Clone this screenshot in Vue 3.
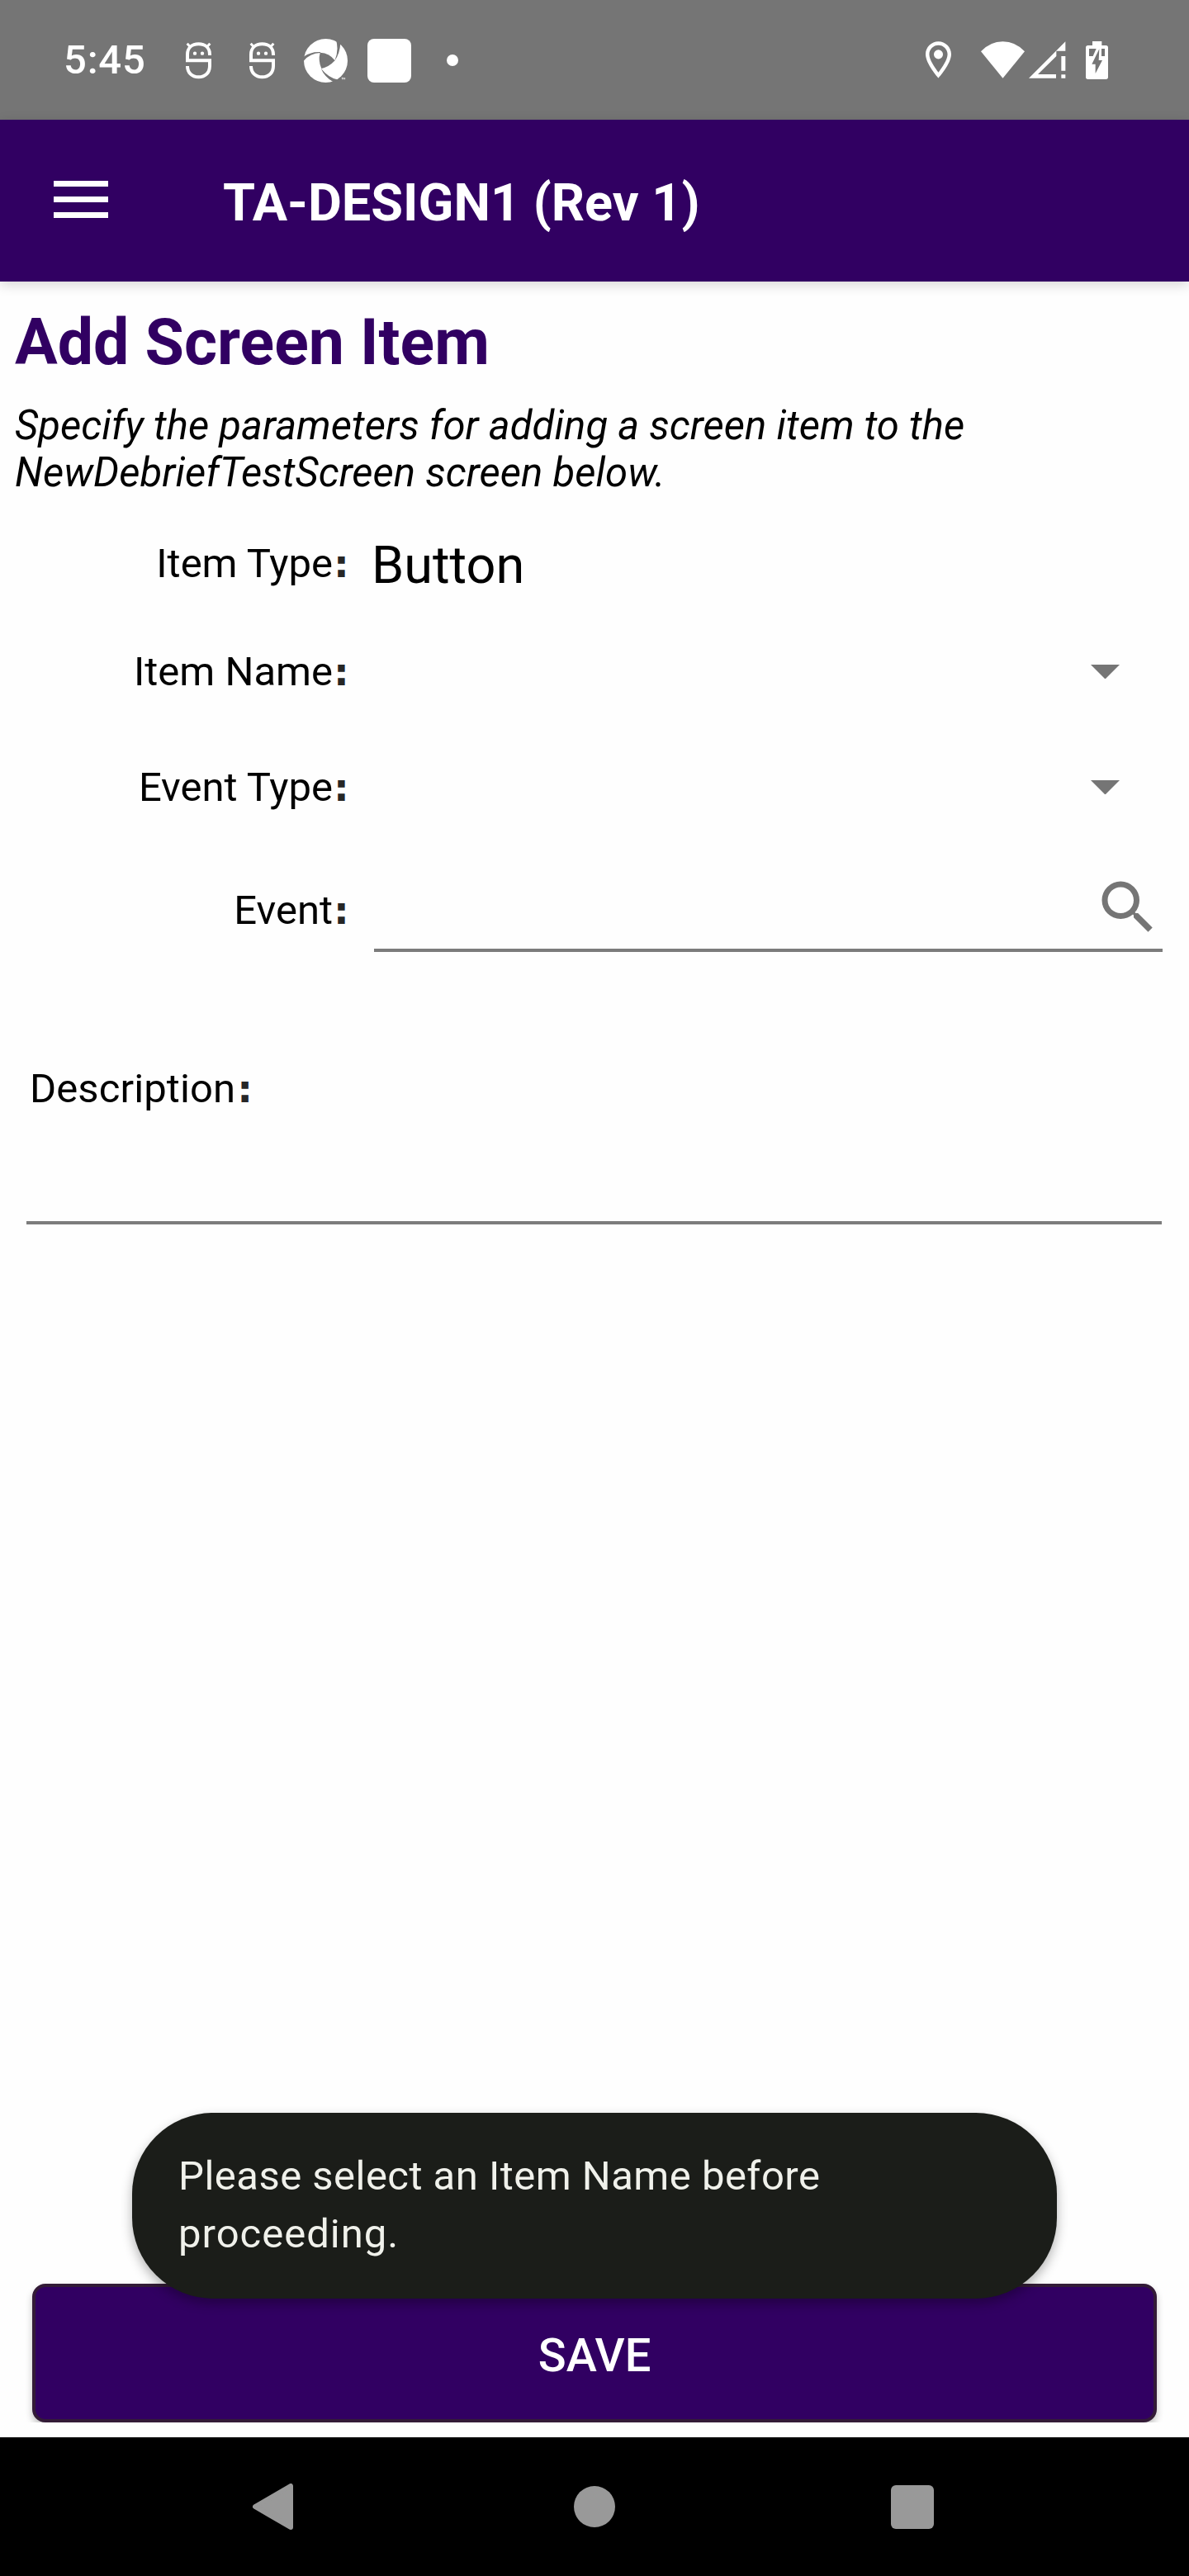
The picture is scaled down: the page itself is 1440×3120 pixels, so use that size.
<script setup>
const fields = [
  { label: 'Item Type', kind: 'text', value: 'Button' },
  { label: 'Item Name', kind: 'select' },
  { label: 'Event Type', kind: 'select' },
  { label: 'Event', kind: 'search' },
]
</script>

<template>
  <div class="screen">
    <div class="status">
      <span class="time">5:45</span>
      <svg v-for="n in 2" :key="n" class="face" viewBox="72 60 99 141">
        <g fill="none" stroke="#fff" stroke-width="12">
          <path d="M162 111V108C162 84 146 70 121.500 70S81 84 81 108V130H162V150C162 174 146 190 121.500 190S81 174 81 150" />
          <path d="M80 68L91 80M163 68L152 80" stroke-width="9" />
        </g>
        <circle cx="108" cy="104" r="6.500" fill="#fff" />
        <circle cx="135" cy="104" r="6.500" fill="#fff" />
      </svg>
      <svg class="aperture" viewBox="504 51 159 159">
        <circle cx="583.500" cy="130.500" r="79.500" fill="#fff" />
        <g fill="#757575">
          <path d="M563 101Q598 103 617 130Q596 153 568 159Q555 130 563 101Z" />
          <path d="M616 131Q632 95 621 54L630 48L637 66Q635 104 616 131Z" />
          <path d="M564 99Q530 96 500 118V136Q522 104 564 102Z" />
          <path d="M566 158Q578 188 611 208L630 200Q594 194 566 158Z" />
        </g>
        <path d="M641 193h6M644 193v6M648 199v-6l2.500 3l2.500-3v6" fill="none" stroke="#fff" stroke-width="2" />
      </svg>
      <span class="tile"></span>
      <span class="dot"></span>
      <svg class="pin" viewBox="5 2 14 20">
        <path fill="#fff" d="M12 2C8.130 2 5 5.130 5 9c0 5.250 7 13 7 13s7-7.750 7-13c0-3.870-3.130-7-7-7zM7 9c0-2.760 2.240-5 5-5s5 2.240 5 5c0 2.880-2.880 7.190-5 9.880C9.920 16.210 7 11.850 7 9z" />
        <circle cx="12" cy="9" r="2.500" fill="#fff" />
      </svg>
      <svg class="wifi" viewBox="324 150 159 135">
        <path fill="#fff" d="M324 187Q358 151 403.500 151T483 187L403.500 284Z" />
      </svg>
      <svg class="signal" viewBox="497 150 135 135">
        <path fill="#fff" d="M630 151V185H597V204L530 270H596V284H497ZM615 204H630V257H615ZM615 271H630V284H615Z" />
      </svg>
      <svg class="battery" viewBox="705 150 81 138">
        <path fill="#fff" d="M729 150H763V165H778Q786 165 786 173V280Q786 288 778 288H713Q705 288 705 280V173Q705 165 713 165H729Z" />
        <path fill="#757575" d="M717 177H774V204H717Z" />
        <path fill="#fff" d="M743 177H762V204H731Z" />
        <path fill="#757575" d="M754 178L727 233H740V267L765 219H752Z" />
      </svg>
    </div>

    <header class="appbar">
      <span class="menu"><i></i><i></i><i></i></span>
      <span class="title">TA-DESIGN1 (Rev 1)</span>
    </header>

    <main class="content">
      <h1>Add Screen Item</h1>
      <p class="intro">Specify the parameters for adding a screen item to the<br />NewDebriefTestScreen screen below.</p>

      <div v-for="f in fields" :key="f.label" class="row" :class="f.kind">
        <div class="label">{{ f.label }}<b>:</b></div>
        <div v-if="f.kind === 'text'" class="value">{{ f.value }}</div>
        <div v-else-if="f.kind === 'select'" class="picker">
          <svg viewBox="0 0 35 17.500"><path d="M0 0H35L17.500 17.500Z" fill="#757575" /></svg>
        </div>
        <div v-else class="input">
          <svg viewBox="0 0 24 24"><path fill="#757575" d="M15.500 14h-.79l-.28-.27A6.470 6.470 0 0 0 16 9.500 6.500 6.500 0 1 0 9.500 16c1.610 0 3.090-.59 4.230-1.570l.27.28v.79l5 4.990L20.490 19l-4.990-5zm-6 0C7.010 14 5 11.990 5 9.500S7.010 5 9.500 5 14 7.010 14 9.500 11.990 14 9.500 14z" /></svg>
        </div>
      </div>

      <div class="description">
        <div class="label">Description<b>:</b></div>
      </div>

      <div class="footer">
        <button class="save">SAVE</button>
      </div>
    </main>

    <nav class="nav">
      <svg class="back" viewBox="0 0 49 56"><path d="M46 3V53L3 28Z" fill="#999" stroke="#999" stroke-width="6" stroke-linejoin="round" /></svg>
      <span class="home"></span>
      <span class="recent"></span>
    </nav>

    <div class="toast">
      <div>Please select an Item Name before</div>
      <div class="last">proceeding.</div>
    </div>
  </div>
</template>

<style>
body {
  margin: 0;
}
</style>

<style scoped>
.screen {
  position: relative;
  width: 1440px;
  height: 3120px;
  display: flex;
  flex-direction: column;
  background: #fefefe;
  font-family: Roboto, sans-serif;
  color: #000;
  overflow: hidden;
}
svg {
  display: block;
  flex: none;
}
.status {
  height: 145px;
  flex: none;
  box-sizing: border-box;
  padding-left: 77px;
  display: flex;
  align-items: flex-start;
  background: #757575;
  color: #fff;
}
.time {
  width: 147px;
  margin-top: 44px;
  font-size: 49px;
  line-height: 57px;
  font-weight: 500;
  letter-spacing: 0.8px;
}
.face {
  width: 33px;
  height: 47px;
  margin: 50px 44px 0 0;
}
.aperture {
  width: 53px;
  height: 53px;
  margin: 47px 0 0 -10px;
}
.tile {
  width: 53px;
  height: 53px;
  margin: 47px 0 0 24px;
  border-radius: 8px;
  background: #fff;
}
.dot {
  width: 14px;
  height: 14px;
  margin: 66px 0 0 43px;
  border-radius: 50%;
  background: #fff;
}
.pin {
  width: 31px;
  height: 45px;
  margin: 50px 0 0 566px;
}
.wifi {
  width: 53px;
  height: 45px;
  margin: 50px 0 0 36px;
}
.signal {
  width: 45px;
  height: 45px;
  margin: 50px 0 0 5px;
}
.battery {
  width: 27px;
  height: 46px;
  margin: 50px 0 0 24px;
}
.appbar {
  position: relative;
  height: 196px;
  flex: none;
  display: flex;
  align-items: flex-start;
  background: #310062;
  color: #fff;
  box-shadow: 0 4px 14px rgba(0, 0, 0, 0.16);
}
.menu {
  width: 66px;
  margin: 74px 0 0 65px;
  display: flex;
  flex-direction: column;
  gap: 12px;
}
.menu i {
  height: 7px;
  background: #fff;
}
.title {
  margin: 64px 0 0 139px;
  font-size: 63px;
  line-height: 74px;
  font-weight: 700;
  white-space: nowrap;
}
.content {
  flex: 1;
  display: flex;
  flex-direction: column;
  padding-top: 29px;
}
h1 {
  margin: 0 0 27px 18px;
  font-size: 77px;
  line-height: 90px;
  font-weight: 700;
  color: #310062;
}
.intro {
  margin: 0 0 21px 18px;
  font-size: 49px;
  line-height: 57px;
  font-style: italic;
  letter-spacing: 0.06px;
  white-space: nowrap;
}
.row {
  display: flex;
  align-items: center;
  height: 125px;
}
.row.select {
  height: 133px;
}
.row.select + .row.select {
  height: 147px;
}
.row.search {
  height: 152px;
  align-items: flex-start;
}
.label {
  font-size: 49px;
  line-height: 57px;
  white-space: nowrap;
}
.label b {
  display: inline-block;
  width: 19px;
  padding-left: 1px;
  font-family: "DejaVu Sans", sans-serif;
  font-size: 47px;
  line-height: 40px;
  font-weight: 700;
  color: #262626;
  text-align: left;
}
.row .label {
  width: 423px;
  margin-right: 30px;
  text-align: right;
}
.row.text .label {
  margin-top: -4px;
}
.row.search .label {
  margin-top: 47px;
}
.value {
  margin-left: -3px;
  font-size: 63px;
  line-height: 74px;
}
.picker {
  flex: 1;
  display: flex;
  justify-content: flex-end;
  padding-right: 84px;
}
.picker svg {
  width: 35px;
  height: 17.500px;
}
.input {
  width: 955px;
  height: 126px;
  box-sizing: border-box;
  border-bottom: 4px solid #7c7c7c;
  display: flex;
  justify-content: flex-end;
}
.input svg {
  width: 84px;
  height: 84px;
  margin-top: 30px;
}
.description {
  height: 189px;
  margin: 111px 33px 0 32px;
  border-bottom: 4px solid #7c7c7c;
}
.description .label {
  padding-left: 4px;
  letter-spacing: 0.1px;
}
.description .label b {
  padding-left: 2px;
}
.footer {
  margin-top: auto;
  padding: 20px 39px 0;
  margin-bottom: 18px;
  overflow: hidden;
}
.save {
  display: block;
  width: 100%;
  height: 168px;
  padding: 5px 0 0;
  border: 4px solid #331b37;
  border-radius: 16px;
  background: #310062;
  color: #fff;
  font-family: Roboto, sans-serif;
  font-size: 56px;
  line-height: 66px;
  font-weight: 500;
  box-shadow: 0 5px 9px rgba(0, 0, 0, 0.24);
}
.nav {
  height: 168px;
  flex: none;
  display: flex;
  align-items: center;
  background: #000;
}
.back {
  width: 49px;
  height: 56px;
  margin-left: 306px;
}
.home {
  width: 50px;
  height: 50px;
  margin-left: 340px;
  border-radius: 50%;
  background: #999;
}
.recent {
  width: 52px;
  height: 53px;
  margin-left: 334px;
  border-radius: 6px;
  background: #999;
}
.toast {
  position: absolute;
  left: 160px;
  top: 2559px;
  width: 1120px;
  height: 225px;
  box-sizing: border-box;
  padding: 42px 56px;
  border-radius: 98px;
  background: #1b1d19;
  color: #f0f1eb;
  font-size: 49px;
  line-height: 70px;
  letter-spacing: 0.48px;
  white-space: nowrap;
  box-shadow: 0 6px 14px rgba(0, 0, 0, 0.3);
}
.toast .last {
  letter-spacing: 1px;
}
</style>
